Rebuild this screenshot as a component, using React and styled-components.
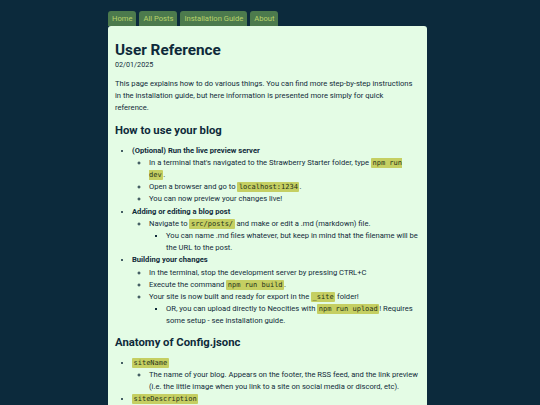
import React from "react";
import styled, { createGlobalStyle } from "styled-components";

const GlobalStyle = createGlobalStyle`
  html, body {
    margin: 0;
    padding: 0;
    background: #0c2a3c;
    height: 100%;
    overflow: hidden;
  }
  body {
    font-family: Roboto, "Liberation Sans", sans-serif;
    color: #112b3a;
  }
`;

const Page = styled.div`
  width: 319px;
  margin: 11px 0 0 108px;
`;

const Nav = styled.nav`
  display: flex;
  gap: 3px;
  align-items: flex-end;
`;

const Tab = styled.a`
  display: block;
  background: #4c7a4d;
  color: #b9d36b;
  font-size: 7.6px;
  line-height: 14px;
  padding: 1px 4px 0;
  border-radius: 3px 3px 0 0;
  text-decoration: none;
`;

const Card = styled.main`
  background: #e4fce5;
  border-radius: 3px 3px 0 0;
  padding: 10px 8px 20px 7px;
  min-height: 400px;
  font-size: 7.6px;
  line-height: 12.2px;
`;

const Title = styled.h1`
  font-size: 15.3px;
  line-height: 20px;
  font-weight: 700;
  margin: 4px 0 0;
  color: #0e2a3a;
`;

const DateLine = styled.div`
  font-size: 7.2px;
  line-height: 10px;
  margin-bottom: 8px;
`;

const Para = styled.p`
  margin: 0 0 8px;
`;

const Heading = styled.h2`
  font-size: 11.3px;
  line-height: 16px;
  font-weight: 700;
  margin: 0 0 6px;
  color: #0e2a3a;
`;

const List = styled.ul`
  margin: 0 0 ${(p) => (p.$top ? "7px" : "0")};
  padding-left: 17px;
  list-style-type: ${(p) => p.$type || "disc"};
`;

const Strong = styled.strong`
  font-weight: 700;
`;

const Code = styled.code`
  font-family: "DejaVu Sans Mono", "Liberation Mono", monospace;
  font-size: 7px;
  background: #c5cf62;
  color: #26321a;
  padding: 1px 1.5px;
  border-radius: 1px;
`;

export default function App() {
  return (
    <>
      <GlobalStyle />
      <Page>
        <Nav>
          <Tab href="#">Home</Tab>
          <Tab href="#">All Posts</Tab>
          <Tab href="#">Installation Guide</Tab>
          <Tab href="#">About</Tab>
        </Nav>
        <Card>
          <Title>User Reference</Title>
          <DateLine>02/01/2025</DateLine>
          <Para>
            This page explains how to do various things. You can find more
            step-by-step instructions in the installation guide, but here
            information is presented more simply for quick reference.
          </Para>
          <Heading>How to use your blog</Heading>
          <List $top>
            <li>
              <Strong>(Optional) Run the live preview server</Strong>
              <List $type="circle">
                <li>
                  In a terminal that's navigated to the Strawberry Starter
                  folder, type <Code>npm run dev</Code>.
                </li>
                <li>
                  Open a browser and go to <Code>localhost:1234</Code>.
                </li>
                <li>You can now preview your changes live!</li>
              </List>
            </li>
            <li>
              <Strong>Adding or editing a blog post</Strong>
              <List $type="circle">
                <li>
                  Navigate to <Code>src/posts/</Code> and make or edit a .md
                  (markdown) file.
                  <List $type="square">
                    <li>
                      You can name .md files whatever, but keep in mind that
                      the filename will be the URL to the post.
                    </li>
                  </List>
                </li>
              </List>
            </li>
            <li>
              <Strong>Building your changes</Strong>
              <List $type="circle">
                <li>
                  In the terminal, stop the development server by pressing
                  CTRL+C
                </li>
                <li>
                  Execute the command <Code>npm run build</Code>.
                </li>
                <li>
                  Your site is now built and ready for export in the{" "}
                  <Code>_site</Code> folder!
                  <List $type="square">
                    <li>
                      OR, you can upload directly to Neocities with{" "}
                      <Code>npm run upload</Code>! Requires some setup - see
                      installation guide.
                    </li>
                  </List>
                </li>
              </List>
            </li>
          </List>
          <Heading>Anatomy of Config.jsonc</Heading>
          <List $top>
            <li>
              <Code>siteName</Code>
              <List $type="circle">
                <li>
                  The name of your blog. Appears on the footer, the RSS feed,
                  and the link preview (i.e. the little image when you link to
                  a site on social media or discord, etc).
                </li>
              </List>
            </li>
            <li>
              <Code>siteDescription</Code>
            </li>
          </List>
        </Card>
      </Page>
    </>
  );
}
